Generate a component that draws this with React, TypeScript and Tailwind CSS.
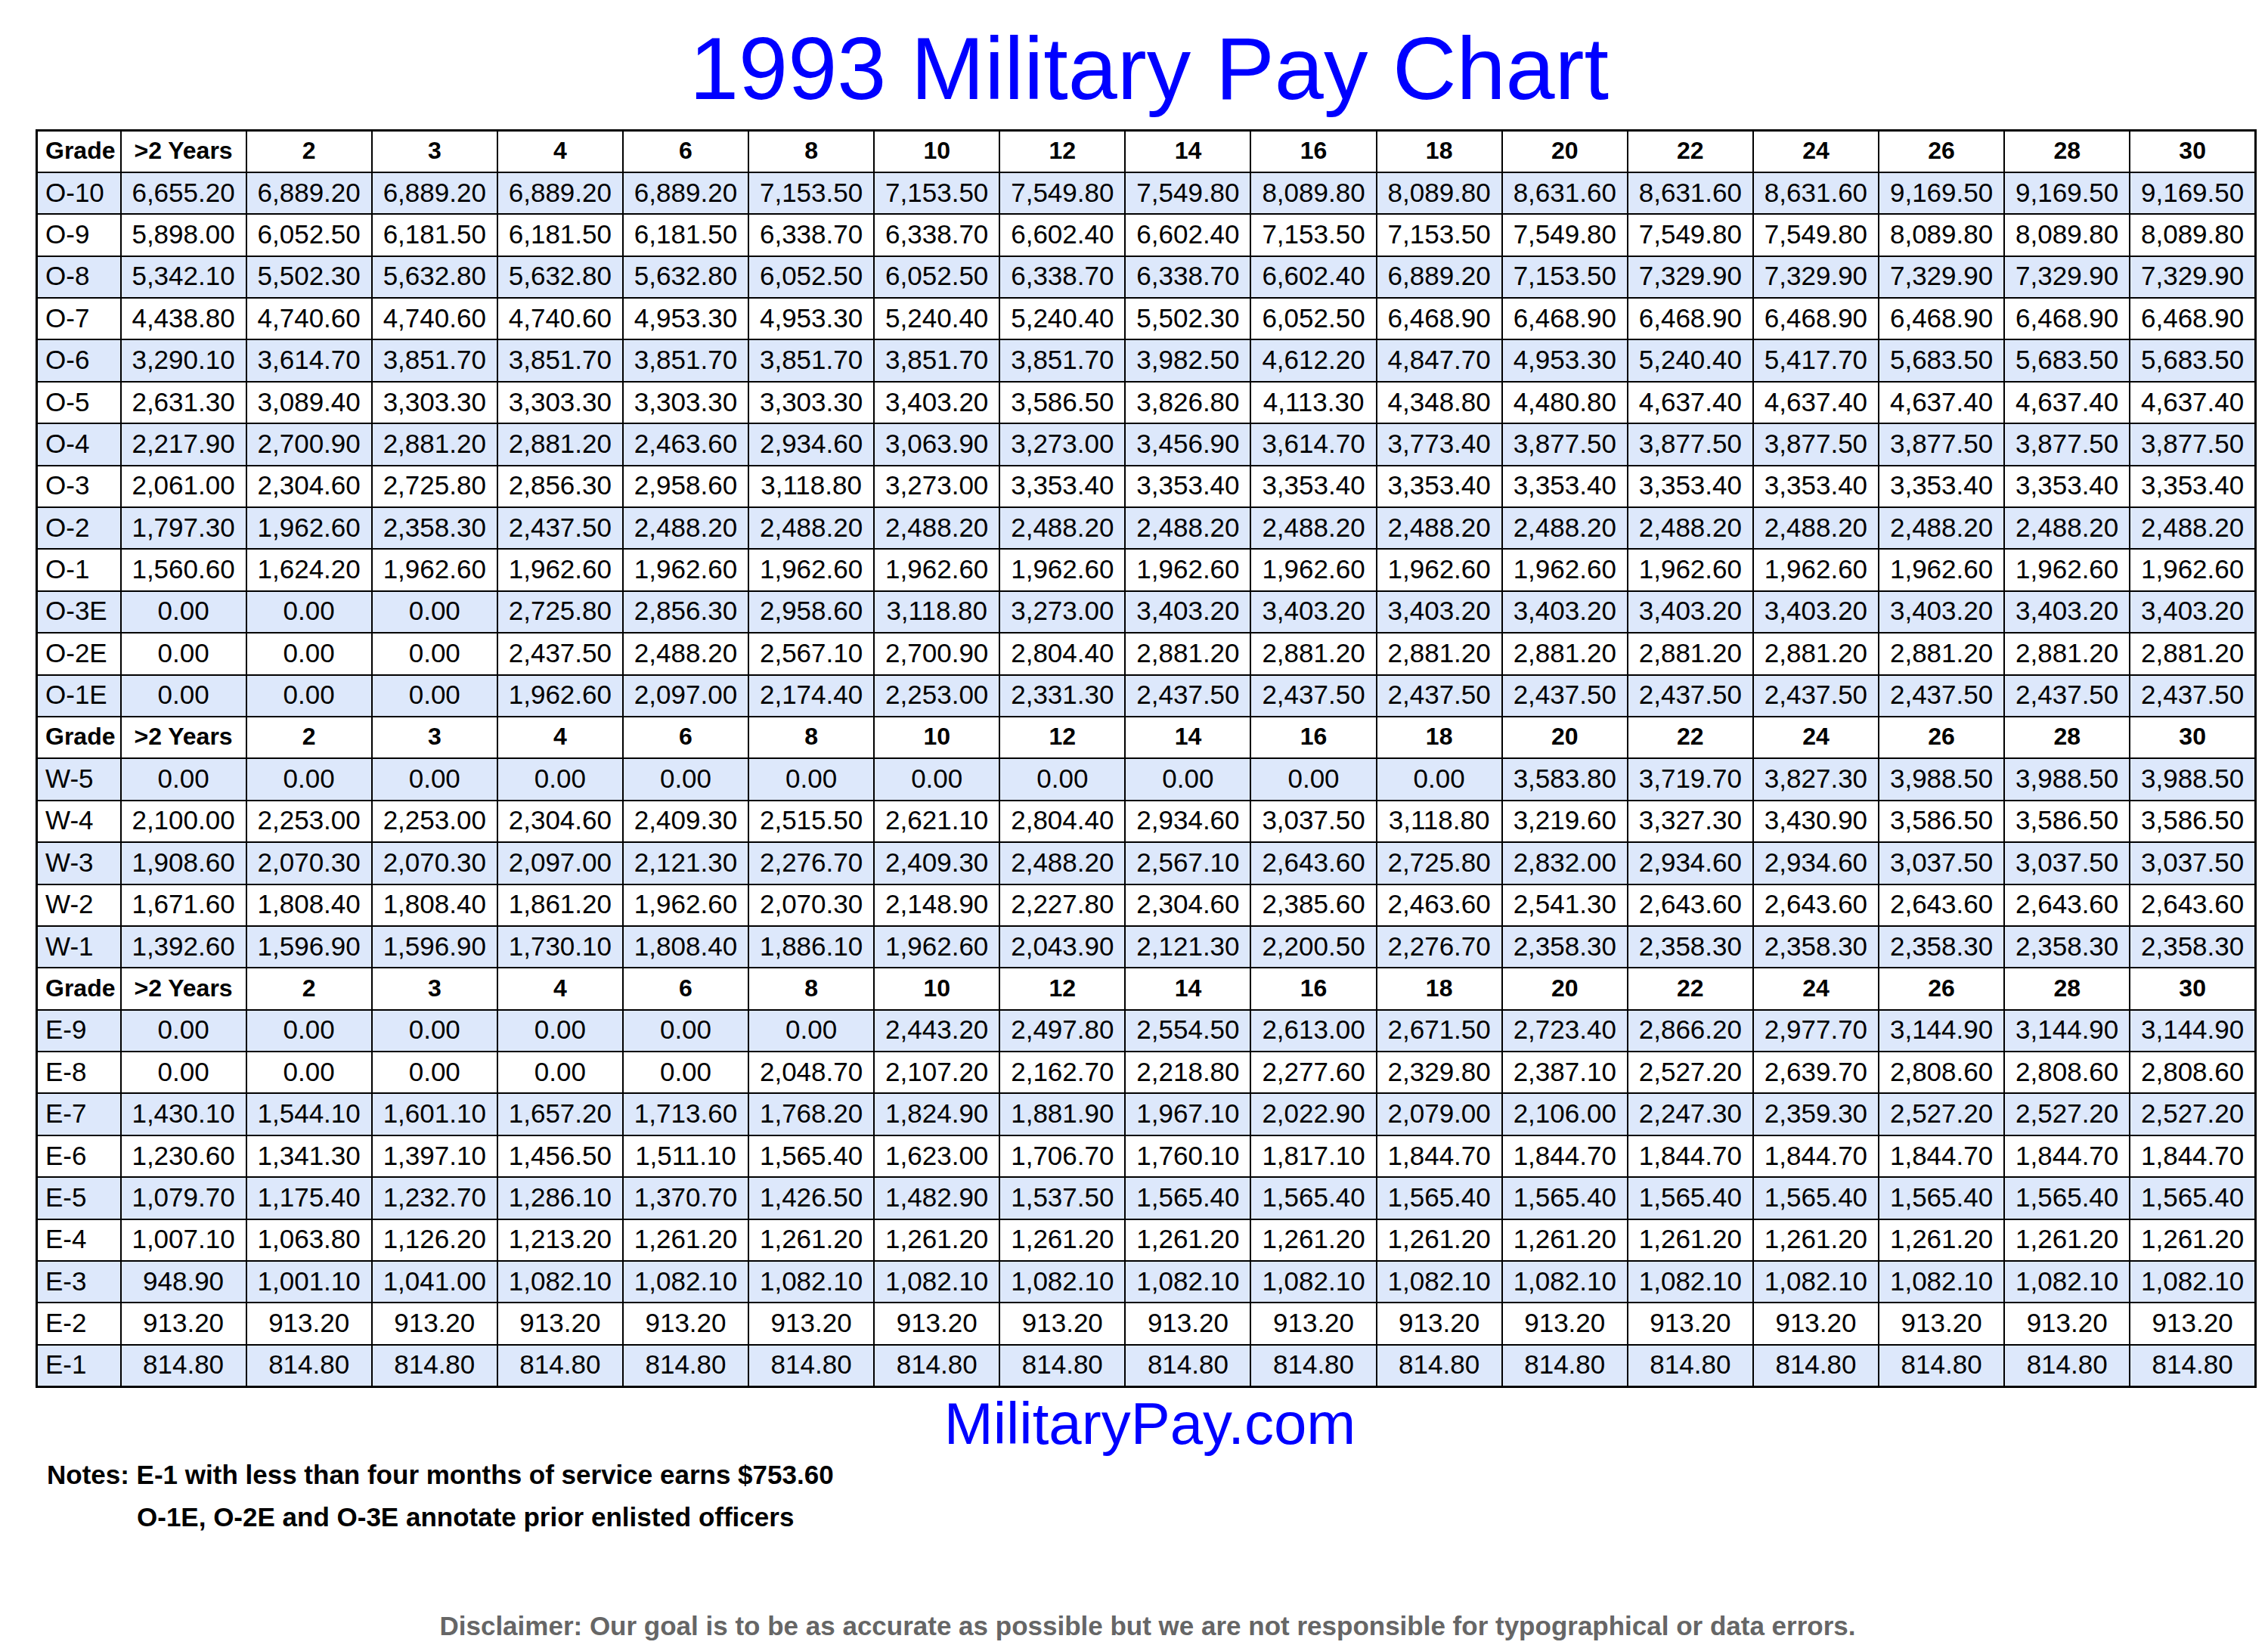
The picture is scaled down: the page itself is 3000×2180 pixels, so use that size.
import { FC } from "react";

type PayRow = {
    grade: string
    pay: string[]
}

const rep = (value: string, n: number) => Array(n).fill(value);

const YEARS = [">2 Years", "2", "3", "4", "6", "8", "10", "12", "14", "16", "18", "20", "22", "24", "26", "28", "30"];

const officers: PayRow[] = [
    { grade: "O-10", pay: ["6,655.20", "6,889.20", "6,889.20", "6,889.20", "6,889.20", "7,153.50", "7,153.50", "7,549.80", "7,549.80", "8,089.80", "8,089.80", "8,631.60", "8,631.60", "8,631.60", "9,169.50", "9,169.50", "9,169.50"] },
    { grade: "O-9", pay: ["5,898.00", "6,052.50", "6,181.50", "6,181.50", "6,181.50", "6,338.70", "6,338.70", "6,602.40", "6,602.40", "7,153.50", "7,153.50", "7,549.80", "7,549.80", "7,549.80", "8,089.80", "8,089.80", "8,089.80"] },
    { grade: "O-8", pay: ["5,342.10", "5,502.30", "5,632.80", "5,632.80", "5,632.80", "6,052.50", "6,052.50", "6,338.70", "6,338.70", "6,602.40", "6,889.20", "7,153.50", "7,329.90", "7,329.90", "7,329.90", "7,329.90", "7,329.90"] },
    { grade: "O-7", pay: ["4,438.80", "4,740.60", "4,740.60", "4,740.60", "4,953.30", "4,953.30", "5,240.40", "5,240.40", "5,502.30", "6,052.50", ...rep("6,468.90", 7)] },
    { grade: "O-6", pay: ["3,290.10", "3,614.70", ...rep("3,851.70", 6), "3,982.50", "4,612.20", "4,847.70", "4,953.30", "5,240.40", "5,417.70", ...rep("5,683.50", 3)] },
    { grade: "O-5", pay: ["2,631.30", "3,089.40", ...rep("3,303.30", 4), "3,403.20", "3,586.50", "3,826.80", "4,113.30", "4,348.80", "4,480.80", ...rep("4,637.40", 5)] },
    { grade: "O-4", pay: ["2,217.90", "2,700.90", "2,881.20", "2,881.20", "2,463.60", "2,934.60", "3,063.90", "3,273.00", "3,456.90", "3,614.70", "3,773.40", ...rep("3,877.50", 6)] },
    { grade: "O-3", pay: ["2,061.00", "2,304.60", "2,725.80", "2,856.30", "2,958.60", "3,118.80", "3,273.00", ...rep("3,353.40", 10)] },
    { grade: "O-2", pay: ["1,797.30", "1,962.60", "2,358.30", "2,437.50", ...rep("2,488.20", 13)] },
    { grade: "O-1", pay: ["1,560.60", "1,624.20", ...rep("1,962.60", 15)] },
    { grade: "O-3E", pay: [...rep("0.00", 3), "2,725.80", "2,856.30", "2,958.60", "3,118.80", "3,273.00", ...rep("3,403.20", 9)] },
    { grade: "O-2E", pay: [...rep("0.00", 3), "2,437.50", "2,488.20", "2,567.10", "2,700.90", "2,804.40", ...rep("2,881.20", 9)] },
    { grade: "O-1E", pay: [...rep("0.00", 3), "1,962.60", "2,097.00", "2,174.40", "2,253.00", "2,331.30", ...rep("2,437.50", 9)] },
];

const warrants: PayRow[] = [
    { grade: "W-5", pay: [...rep("0.00", 11), "3,583.80", "3,719.70", "3,827.30", ...rep("3,988.50", 3)] },
    { grade: "W-4", pay: ["2,100.00", "2,253.00", "2,253.00", "2,304.60", "2,409.30", "2,515.50", "2,621.10", "2,804.40", "2,934.60", "3,037.50", "3,118.80", "3,219.60", "3,327.30", "3,430.90", ...rep("3,586.50", 3)] },
    { grade: "W-3", pay: ["1,908.60", "2,070.30", "2,070.30", "2,097.00", "2,121.30", "2,276.70", "2,409.30", "2,488.20", "2,567.10", "2,643.60", "2,725.80", "2,832.00", "2,934.60", "2,934.60", ...rep("3,037.50", 3)] },
    { grade: "W-2", pay: ["1,671.60", "1,808.40", "1,808.40", "1,861.20", "1,962.60", "2,070.30", "2,148.90", "2,227.80", "2,304.60", "2,385.60", "2,463.60", "2,541.30", ...rep("2,643.60", 5)] },
    { grade: "W-1", pay: ["1,392.60", "1,596.90", "1,596.90", "1,730.10", "1,808.40", "1,886.10", "1,962.60", "2,043.90", "2,121.30", "2,200.50", "2,276.70", ...rep("2,358.30", 6)] },
];

const enlisted: PayRow[] = [
    { grade: "E-9", pay: [...rep("0.00", 6), "2,443.20", "2,497.80", "2,554.50", "2,613.00", "2,671.50", "2,723.40", "2,866.20", "2,977.70", ...rep("3,144.90", 3)] },
    { grade: "E-8", pay: [...rep("0.00", 5), "2,048.70", "2,107.20", "2,162.70", "2,218.80", "2,277.60", "2,329.80", "2,387.10", "2,527.20", "2,639.70", ...rep("2,808.60", 3)] },
    { grade: "E-7", pay: ["1,430.10", "1,544.10", "1,601.10", "1,657.20", "1,713.60", "1,768.20", "1,824.90", "1,881.90", "1,967.10", "2,022.90", "2,079.00", "2,106.00", "2,247.30", "2,359.30", ...rep("2,527.20", 3)] },
    { grade: "E-6", pay: ["1,230.60", "1,341.30", "1,397.10", "1,456.50", "1,511.10", "1,565.40", "1,623.00", "1,706.70", "1,760.10", "1,817.10", ...rep("1,844.70", 7)] },
    { grade: "E-5", pay: ["1,079.70", "1,175.40", "1,232.70", "1,286.10", "1,370.70", "1,426.50", "1,482.90", "1,537.50", ...rep("1,565.40", 9)] },
    { grade: "E-4", pay: ["1,007.10", "1,063.80", "1,126.20", "1,213.20", ...rep("1,261.20", 13)] },
    { grade: "E-3", pay: ["948.90", "1,001.10", "1,041.00", ...rep("1,082.10", 14)] },
    { grade: "E-2", pay: rep("913.20", 17) },
    { grade: "E-1", pay: rep("814.80", 17) },
];

const HeaderRow: FC = () => (
    <tr className="h-[55.4px] bg-white">
        <th className="border-2 border-black pl-[10px] pb-[3px] text-left text-[32px] font-bold">Grade</th>
        {YEARS.map(y => (
            <th key={y} className="border-2 border-black pb-[3px] text-center text-[32px] font-bold">{y}</th>
        ))}
    </tr>
);

const Group: FC<{ rows: PayRow[] }> = ({ rows }) => (
    <>
        <HeaderRow />
        {rows.map((row, i) => (
            <tr key={row.grade} className={`h-[55.4px] ${i % 2 === 0 ? "bg-[#dde8fb]" : "bg-white"}`}>
                <td className="border-2 border-black pl-[10px] pb-[3px] text-left text-[35px]">{row.grade}</td>
                {row.pay.map((p, j) => (
                    <td key={j} className="border-2 border-black pb-[3px] text-center text-[35px]">{p}</td>
                ))}
            </tr>
        ))}
    </>
);

export default function App() {
    return (
        <div className="w-[3000px] h-[2180px] bg-white text-black font-['Liberation_Sans',Arial,sans-serif]">
            <div className="ml-[47px] w-[2938px]">
                <h1 className="pt-[32px] pl-[8px] text-center text-[117px] leading-[117px] text-[#0000ff]">1993 Military Pay Chart</h1>

                <table className="mt-[22px] w-full table-fixed border-collapse border-[3px] border-black leading-none">
                    <colgroup>
                        <col className="w-[111px]" />
                    </colgroup>
                    <tbody>
                        <Group rows={officers} />
                        <Group rows={warrants} />
                        <Group rows={enlisted} />
                    </tbody>
                </table>

                <div className="mt-[8px] pl-[10px] text-center text-[78px] leading-[78px] text-[#0000ff]">MilitaryPay.com</div>
            </div>

            <div className="ml-[62px] mt-[1px] text-[35px] font-bold leading-[56px]">
                <p>Notes: E-1 with less than four months of service earns $753.60</p>
                <p className="pl-[119px]">O-1E, O-2E and O-3E annotate prior enlisted officers</p>
            </div>

            <div className="ml-[47px] w-[2938px] mt-[98px] pl-[4px] text-center text-[35px] font-bold leading-[35px] text-[#666666]">
                Disclaimer: Our goal is to be as accurate as possible but we are not responsible for typographical or data errors.
            </div>
        </div>
    );
}
